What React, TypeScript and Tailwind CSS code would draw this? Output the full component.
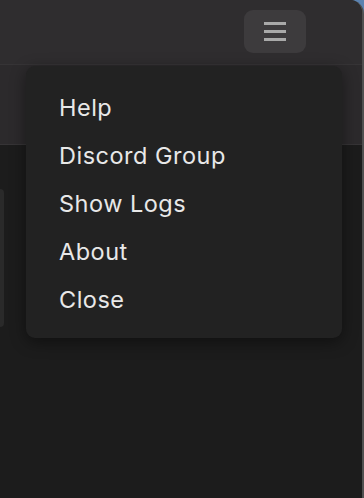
export default function App() {
  const items = ["Help", "Discord Group", "Show Logs", "About", "Close"];
  return (
    <div className="w-[364px] h-[498px] bg-[#5b82b0] overflow-hidden">
      <div
        className="relative w-full h-full flex flex-col bg-[#1c1c1c] rounded-tr-[14px] border-r-2 border-[#505050] overflow-hidden"
        style={{ fontFamily: "Inter, 'Noto Sans', sans-serif" }}
      >
        <header className="h-[65px] shrink-0 flex items-start justify-end pt-[10px] pr-[56px] bg-[#2f2d2f] border-b border-[#363436]">
          <button className="w-[62px] h-[43px] rounded-[9px] bg-[#3d3b3d] flex flex-col items-center justify-center gap-[5px]">
            <span className="block w-[22px] h-[3px] bg-[#a9a9a9]" />
            <span className="block w-[22px] h-[3px] bg-[#a9a9a9]" />
            <span className="block w-[22px] h-[3px] bg-[#a9a9a9]" />
          </button>
        </header>
        <div className="h-[80px] shrink-0 bg-[#2c2a2c] border-b border-[#363436]" />
        <div className="flex-1 pt-[44px]">
          <div className="w-[4px] h-[138px] bg-[#2a2a2a] rounded-r-[5px]" />
        </div>

        <div className="absolute left-[26px] top-[66px] w-[316px] pt-[18px] pb-[14px] rounded-[9px] bg-[#222222] shadow-[0_4px_16px_rgba(0,0,0,0.45)]">
          {items.map((label) => (
            <div
              key={label}
              className="h-[48px] flex items-center pl-[33px] text-[23.5px] text-[#e8e8e8] tracking-[0.5px]"
            >
              {label}
            </div>
          ))}
        </div>
      </div>
    </div>
  );
}
